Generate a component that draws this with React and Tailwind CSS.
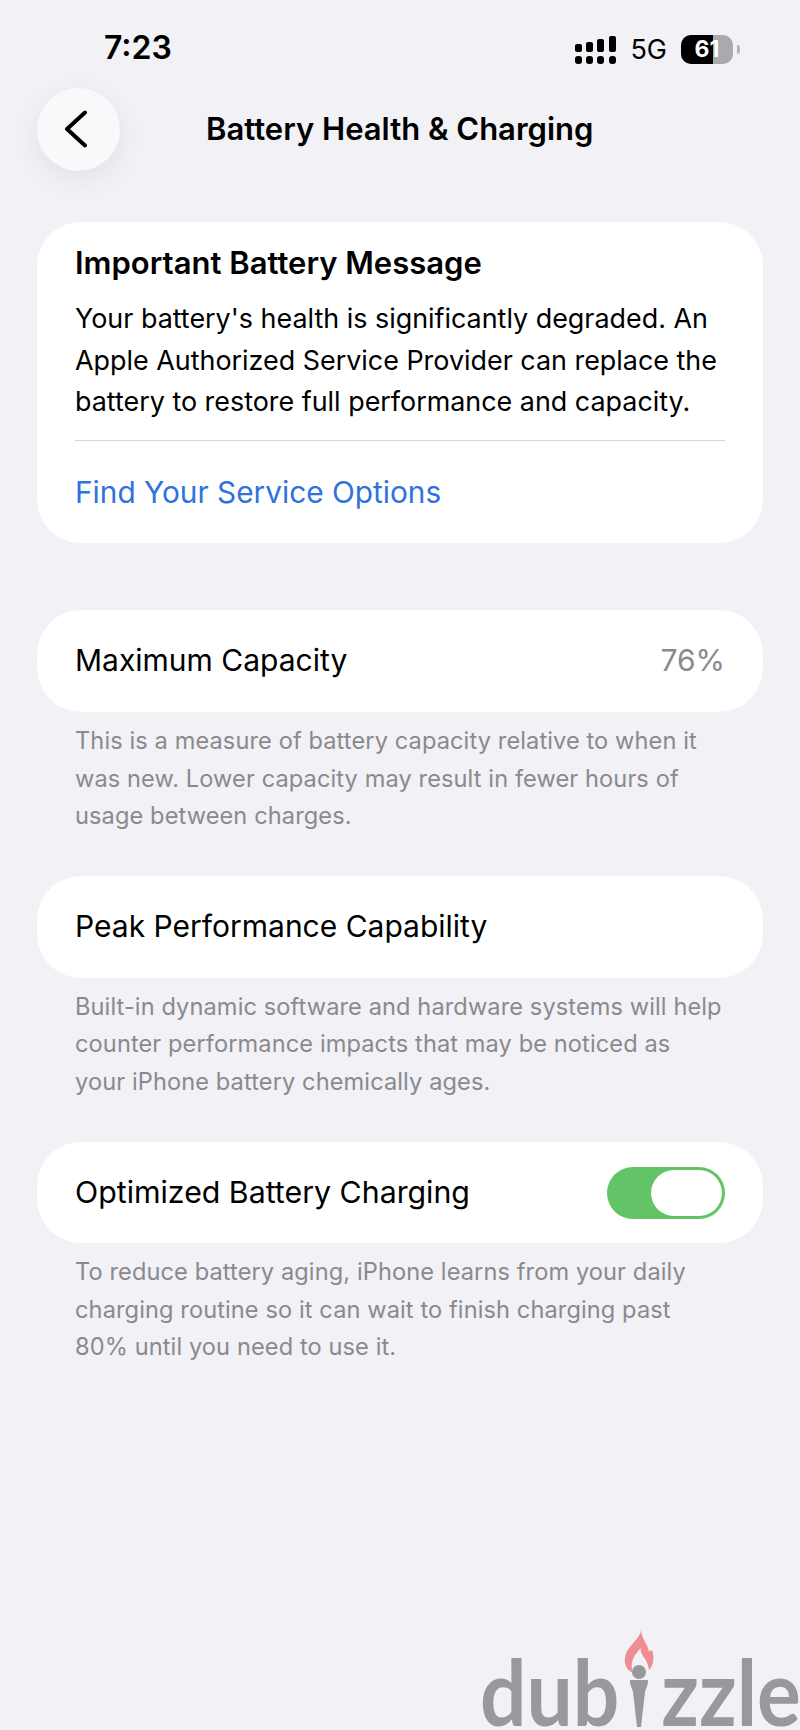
const bodyFont = "font-['Inter','Liberation_Sans',sans-serif]"

function SignalBars() {
    return (
        <svg width="41" height="28" viewBox="0 0 41 28" className="fill-black">
            <rect x="0" y="8" width="7" height="8" rx="2" />
            <rect x="11" y="6" width="7" height="10" rx="2" />
            <rect x="22" y="3" width="7" height="13" rx="2" />
            <rect x="34" y="0" width="7" height="16" rx="2" />
            <rect x="0" y="20" width="7" height="8" rx="3" />
            <rect x="11" y="20" width="7" height="8" rx="3" />
            <rect x="22" y="20" width="7" height="8" rx="3" />
            <rect x="34" y="20" width="7" height="8" rx="3" />
        </svg>
    )
}

function Battery() {
    return (
        <div className="flex items-center gap-[4px]">
            <div className="relative w-[52px] h-[29px] rounded-[10px] overflow-hidden bg-[#a9a9ae]">
                <div className="absolute left-0 top-0 bottom-0 w-[32px] bg-black" />
                <span className="absolute inset-0 flex items-center justify-center text-white text-[23px] font-bold leading-none">61</span>
            </div>
            <div className="w-[3px] h-[9px] rounded-r-full bg-[#b4b4b9]" />
        </div>
    )
}

function StatusBar() {
    return (
        <div className="flex items-center justify-between pl-[104px] pr-[60px] pt-[31px] h-[64px]">
            <span className="text-[32px] font-semibold leading-none text-black">7:23</span>
            <div className="flex items-center gap-[14px] mt-[4px]">
                <SignalBars />
                <span className="text-[27px] font-normal leading-none text-black">5G</span>
                <Battery />
            </div>
        </div>
    )
}

function Note({ children, mb }) {
    return <p className={`px-[38px] pt-[10px] text-[23.6px] leading-[37.5px] tracking-[0.1px] text-[#8a8a8e] ${mb}`}>{children}</p>
}

export default function App() {
    return (
        <div className={`relative w-[800px] h-[1730px] overflow-hidden bg-[#f1f1f6] text-black ${bodyFont}`}>
            <StatusBar />

            <div className="relative flex items-center h-[82px] mt-[24px] px-[37px]">
                <div className="w-[83px] h-[83px] rounded-full bg-[#f9f9fc] shadow-[0_8px_30px_rgba(0,0,0,0.07)] flex items-center justify-center">
                    <svg width="26" height="38" viewBox="0 0 26 38" fill="none" className="mr-[6px]">
                        <path d="M22 2.5 L4 19 L22 35.5" stroke="black" strokeWidth="4" strokeLinecap="round" strokeLinejoin="round" />
                    </svg>
                </div>
                <h1 className="ml-[86px] text-[31px] font-semibold leading-none -mt-[1px]">Battery Health &amp; Charging</h1>
            </div>

            <div className="flex flex-col mt-[52px] mx-[37px]">
                <section className="rounded-[44px] bg-white px-[38px] h-[321px] pt-[22px]">
                    <h2 className="text-[31px] font-semibold leading-[38px]">Important Battery Message</h2>
                    <p className="mt-[16px] text-[26.9px] leading-[41.5px]">
                        Your battery's health is significantly degraded. An<br />
                        Apple Authorized Service Provider can replace the<br />
                        battery to restore full performance and capacity.
                    </p>
                    <div className="mt-[17px] border-t border-[#d6d6da]" />
                    <p className="mt-[33px] text-[29.8px] leading-[36px] text-[#2f72dc]">Find Your Service Options</p>
                </section>

                <section className="mt-[67px] rounded-[44px] bg-white px-[38px] h-[102px] flex items-center justify-between">
                    <span className="text-[30px] -mt-[1px]">Maximum Capacity</span>
                    <span className="text-[30px] -mt-[1px] text-[#8a8a8e]">76%</span>
                </section>
                <Note mb="mb-[41px]">
                    This is a measure of battery capacity relative to when it<br />
                    was new. Lower capacity may result in fewer hours of<br />
                    usage between charges.
                </Note>

                <section className="rounded-[44px] bg-white px-[38px] h-[102px] flex items-center">
                    <span className="text-[30px]">Peak Performance Capability</span>
                </section>
                <Note mb="mb-[42px]">
                    Built-in dynamic software and hardware systems will help<br />
                    counter performance impacts that may be noticed as<br />
                    your iPhone battery chemically ages.
                </Note>

                <section className="rounded-[44px] bg-white px-[38px] h-[101px] flex items-center justify-between">
                    <span className="text-[30.3px]">Optimized Battery Charging</span>
                    <div className="w-[118px] h-[52px] rounded-full bg-[#62c466] flex items-center justify-end pr-[3px]">
                        <div className="w-[71px] h-[46px] rounded-full bg-white" />
                    </div>
                </section>
                <Note>
                    To reduce battery aging, iPhone learns from your daily<br />
                    charging routine so it can wait to finish charging past<br />
                    80% until you need to use it.
                </Note>
            </div>

            {/* watermark */}
            <div className="absolute left-[480px] top-[1630px] w-[320px] h-[100px] flex items-end font-['Lato',sans-serif] font-bold text-[#98989d] text-[82px] leading-[68px]">
                <span className="origin-bottom scale-y-[1.13] mb-[2px]">dub</span>
                <svg width="30" height="100" viewBox="0 0 30 100" className="ml-[5px] mr-[7px] shrink-0">
                    <path d="M17 0 C16 10 3 15 1 28 C0 35 3 40 9 43 C6 34 8 27 17 18 C15 25 24 28 25 40 C29 36 30 30 29 23 C28 19 26 20 25 22 C24 14 18 10 17 0 Z" fill="#ee8e92" />
                    <circle cx="15" cy="42" r="7" fill="#98989d" />
                    <path d="M6 50 H24 C24 56 22 58 21 62 L17 97 H13 L9 62 C8 58 6 56 6 50 Z" fill="#98989d" />
                </svg>
                <span className="origin-bottom scale-y-[1.13] mb-[2px]">zzle</span>
            </div>
        </div>
    )
}
